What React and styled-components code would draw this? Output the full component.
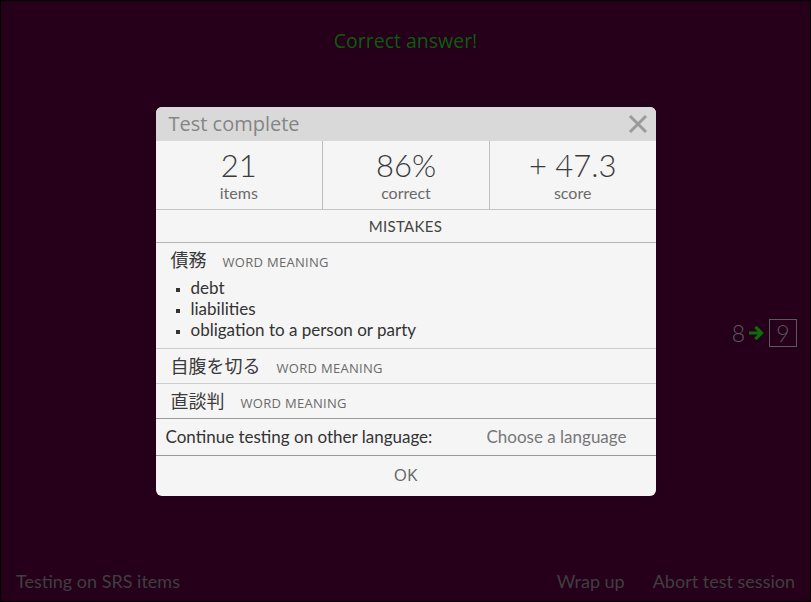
import React from "react";
import styled, { createGlobalStyle } from "styled-components";

const Global = createGlobalStyle`
  html, body { margin: 0; padding: 0; }
  body { background: #000; }
  * { box-sizing: border-box; }
`;

const Page = styled.div`
  width: 811px;
  height: 602px;
  border: 1px solid #000;
  background: #26001b;
  display: flex;
  flex-direction: column;
  font-family: "Lato", sans-serif;
  position: relative;
  overflow: hidden;
`;

const Feedback = styled.div`
  text-align: center;
  color: #0c5c0c;
  font-family: "Open Sans", sans-serif;
  font-size: 19.5px;
  padding-top: 26px;
  height: 60px;
`;

const Middle = styled.div`
  flex: 1;
  display: flex;
  align-items: center;
  justify-content: flex-end;
  padding: 44px 13px 0 0;
`;

const Counter = styled.div`
  display: flex;
  align-items: center;
  gap: 4px;
  color: #5a5a5a;
  font-family: "Lato", sans-serif;
  font-size: 23px;
  font-weight: 300;
`;

const NextBox = styled.span`
  width: 28px;
  height: 28px;
  border: 1px solid #5a5a5a;
  display: flex;
  align-items: center;
  justify-content: center;
`;

const Footer = styled.div`
  display: flex;
  align-items: center;
  padding: 0 15px 0 15px;
  height: 40px;
  color: #3f3f3f;
  font-size: 18px;
  font-family: "Lato", sans-serif;
`;

const FooterLinks = styled.div`
  margin-left: auto;
  display: flex;
  gap: 28px;
`;

const Overlay = styled.div`
  position: absolute;
  inset: 0;
  display: flex;
  align-items: center;
  justify-content: center;
`;

const Modal = styled.div`
  width: 500px;
  background: #f5f5f5;
  border-radius: 6px;
  overflow: hidden;
  display: flex;
  flex-direction: column;
`;

const TitleBar = styled.div`
  height: 34px;
  background: #d9d9d9;
  display: flex;
  align-items: center;
  padding: 0 8px 0 13px;
  font-family: "Open Sans", sans-serif;
  font-size: 20px;
  color: #858585;
`;

const Close = styled.button`
  margin-left: auto;
  border: 0;
  background: none;
  padding: 0;
  width: 20px;
  height: 20px;
  display: flex;
  cursor: pointer;
`;

const Stats = styled.div`
  display: grid;
  grid-template-columns: 1fr 1fr 1fr;
  height: 69px;
  border-bottom: 1px solid #c4c4c4;
`;

const Stat = styled.div`
  display: flex;
  flex-direction: column;
  align-items: center;
  padding-top: 6px;
  border-left: ${(p) => (p.$first ? "none" : "1px solid #bdbdbd")};
`;

const StatValue = styled.div`
  font-size: 31px;
  font-weight: 300;
  color: #3a3a3a;
  line-height: 36px;
`;

const StatLabel = styled.div`
  font-size: 16px;
  color: #6a6a6a;
  line-height: 20px;
`;

const SectionHead = styled.div`
  height: 33px;
  display: flex;
  align-items: center;
  justify-content: center;
  font-size: 15px;
  color: #444;
  letter-spacing: 0.3px;
  border-bottom: 1px solid #b5b5b5;
`;

const Mistake = styled.div`
  padding: ${(p) => (p.$withList ? "3px 15px 8px" : "3px 15px 7px")};
  border-bottom: 1px solid ${(p) => (p.$last ? "#9a9a9a" : "#cccccc")};
`;

const MistakeHead = styled.div`
  display: flex;
  align-items: baseline;
  height: 24px;
`;

const Word = styled.span`
  font-family: "Noto Sans CJK JP", sans-serif;
  font-size: 18px;
  color: #3a3a3a;
  margin-right: 16px;
`;

const Kind = styled.span`
  font-family: "Open Sans", sans-serif;
  font-size: 13px;
  color: #6a6a6a;
  letter-spacing: 0.3px;
`;

const Meanings = styled.ul`
  list-style: square;
  margin: 7px 0 0 0;
  padding-left: 20px;
  font-size: 17px;
  color: #333;
  line-height: 21px;
  li::marker { font-size: 12px; }
`;

const ContinueRow = styled.div`
  height: 37px;
  display: flex;
  align-items: center;
  padding: 0 29px 0 10px;
  font-size: 17px;
  color: #333;
  border-bottom: 1px solid #9a9a9a;
`;

const Choose = styled.span`
  margin-left: auto;
  color: #777;
`;

const OkButton = styled.button`
  height: 40px;
  border: 0;
  background: none;
  font-family: "Open Sans", sans-serif;
  font-size: 17px;
  color: #666;
  cursor: pointer;
  padding: 0 0 2px 0;
`;

const mistakes = [
  { word: "債務", meanings: ["debt", "liabilities", "obligation to a person or party"] },
  { word: "自腹を切る" },
  { word: "直談判" },
];

export default function App() {
  return (
    <>
      <Global />
      <Page>
        <Feedback>Correct answer!</Feedback>
        <Middle>
          <Counter>
            <span>8</span>
            <svg width="16" height="16" viewBox="0 0 16 16">
              <path d="M1 8h11M7.5 3L12.5 8 7.5 13" stroke="#0b6e0b" strokeWidth="3.2" fill="none" strokeLinecap="square" />
            </svg>
            <NextBox>9</NextBox>
          </Counter>
        </Middle>
        <Footer>
          <span>Testing on SRS items</span>
          <FooterLinks>
            <span>Wrap up</span>
            <span>Abort test session</span>
          </FooterLinks>
        </Footer>
        <Overlay>
          <Modal>
            <TitleBar>
              <span>Test complete</span>
              <Close aria-label="close">
                <svg width="20" height="20" viewBox="0 0 20 20">
                  <path d="M2 2L18 18M18 2L2 18" stroke="#9a9a9a" strokeWidth="3" />
                </svg>
              </Close>
            </TitleBar>
            <Stats>
              <Stat $first>
                <StatValue>21</StatValue>
                <StatLabel>items</StatLabel>
              </Stat>
              <Stat>
                <StatValue>86%</StatValue>
                <StatLabel>correct</StatLabel>
              </Stat>
              <Stat>
                <StatValue>+ 47.3</StatValue>
                <StatLabel>score</StatLabel>
              </Stat>
            </Stats>
            <SectionHead>MISTAKES</SectionHead>
            {mistakes.map((m, i) => (
              <Mistake key={m.word} $withList={!!m.meanings} $last={i === mistakes.length - 1}>
                <MistakeHead>
                  <Word>{m.word}</Word>
                  <Kind>WORD MEANING</Kind>
                </MistakeHead>
                {m.meanings && (
                  <Meanings>
                    {m.meanings.map((t) => (
                      <li key={t}>{t}</li>
                    ))}
                  </Meanings>
                )}
              </Mistake>
            ))}
            <ContinueRow>
              <span>Continue testing on other language:</span>
              <Choose>Choose a language</Choose>
            </ContinueRow>
            <OkButton>OK</OkButton>
          </Modal>
        </Overlay>
      </Page>
    </>
  );
}
